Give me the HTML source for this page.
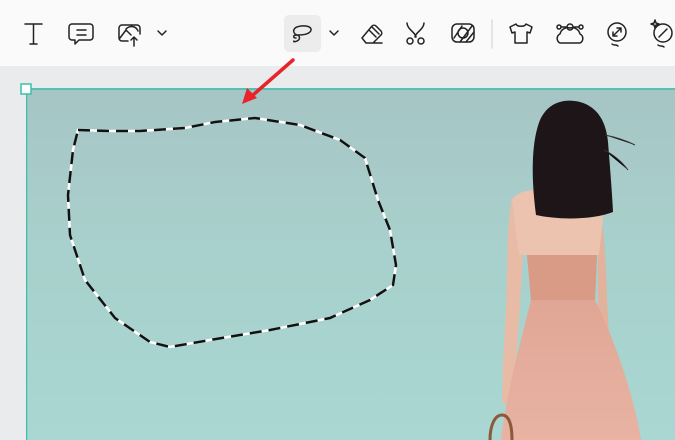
<!DOCTYPE html>
<html><head><style>
body{margin:0;width:675px;height:440px;overflow:hidden;background:#e9ebec;font-family:"Liberation Sans",sans-serif;position:relative}
.tb{position:absolute;left:0;top:0;width:675px;height:66px;background:#fafafa}
svg{position:absolute}
</style></head><body>
<div class="tb"></div>
<svg width="675" height="66" style="left:0;top:0" fill="none" stroke="#222" stroke-width="1.5" stroke-linecap="round" stroke-linejoin="round">
<path d="M25 24h17M33.5 24v20M30 44h7"/>
<path d="M72 24h18a3 3 0 0 1 3 3v10a3 3 0 0 1-3 3h-11l-4 4v-4h-3a3 3 0 0 1-3-3v-10a3 3 0 0 1 3-3zM77 30h9M77 35h9"/>
<path d="M128 41h-6a3 3 0 0 1-3-3v-10a3 3 0 0 1 3-3h15a3 3 0 0 1 3 3v6M120 38l6-8 5 5M134 37v9M131 40l3-3 3 3M126 29c4-4 10-3 12 2"/>
<path d="M158 31l4 4 4-4"/>
<rect x="284" y="15" width="37" height="37" rx="5" fill="#ececec" stroke="none"/>
<path d="M296 38c-3 0-3-3 0-3 5 0 4 5 1 6-2 1-4 1-3 0M297 35c-5-2-5-8 4-9 9-1 12 3 9 6-3 3-9 3-12 3"/>
<path d="M330 31l4 4 4-4"/>
<path d="M362 38l10-12a3 3 0 0 1 4 0l5 5a3 3 0 0 1 0 4l-8 8h-7zM369 30l7 7M372 27l7 7M368 43h14"/>
<path d="M407 23c0 6 9 10 9 14M424 23c0 6-9 10-9 14"/><circle cx="410" cy="41" r="3"/><circle cx="421" cy="41" r="3"/>
<rect x="452" y="24" width="22" height="18" rx="5"/><circle cx="463" cy="33" r="5"/><path d="M454 38l8-12M460 42l12-16M466 42l8-10"/>
<line x1="492" y1="20" x2="492" y2="48" stroke="#ddd"/>
<path d="M516 24l-6 3 2 6 3-1v11h12v-11l3 1 2-6-6-3c-1 3-9 3-10 0z"/>
<path d="M560 34a8 8 0 0 1 10-6a8 8 0 0 1 10 6a5 5 0 0 1 0 9h-20a5 5 0 0 1 0-9zM561 27h5M574 27h5"/><circle cx="570" cy="27" r="3"/><circle cx="559" cy="27" r="2"/><circle cx="581" cy="27" r="2"/>
<circle cx="617" cy="32" r="9"/><path d="M613 36l8-8M613 32v4h4M621 32v-4h-4M612 44c2 2 4 0 6 2"/>
<circle cx="663" cy="33" r="9"/><path d="M659 37l8-8M658 45c2 2 4 0 6 2M655 20l1 3 3 1-3 1-1 3-1-3-3-1 3-1z"/>
</svg>
<svg width="650" height="352" style="left:26px;top:88px" viewBox="26 88 650 352">
<defs>
<linearGradient id="sea" x1="0" y1="0" x2="0" y2="1">
<stop offset="0" stop-color="#a6c5c5"/><stop offset="0.4" stop-color="#a8cfcb"/><stop offset="1" stop-color="#a9d7d2"/></linearGradient>
<linearGradient id="dress" x1="0" y1="0" x2="0" y2="1"><stop offset="0" stop-color="#dea290"/><stop offset="1" stop-color="#e8b3a3"/></linearGradient>
</defs>
<rect x="26" y="88" width="650" height="352" fill="url(#sea)"/>
<line x1="26" y1="89" x2="675" y2="89" stroke="#3bbfad" stroke-width="1.5"/>
<line x1="26.5" y1="89" x2="26.5" y2="440" stroke="#3bbfad" stroke-width="1.5"/>
<path d="M512 198c-6 30-4 70-6 110-2 40-4 70-4 95l10 2c2-30 6-60 8-100 2-35 4-70 4-105z" fill="#e7bba6"/>
<path d="M598 198c6 30 8 65 9 100 2 40 4 70 8 95l-8 2c-4-30-8-60-9-100z" fill="#e2b29c"/>
<path d="M512 200c5-8 15-10 25-10h50c10 0 15 4 18 10l-6 55h-80z" fill="#ecc3ae"/>
<path d="M527 255h70l-2 45c20 40 40 100 46 140h-140c4-40 20-100 30-140z" fill="url(#dress)"/>
<path d="M527 255h70l-2 45h-64z" fill="#d99a86"/>
<path d="M536 215c-4-30-6-70 4-95 8-18 25-22 40-18 18 5 26 20 28 40 2 25 4 50 5 70-20 8-55 8-77 3z" fill="#1d1518"/>
<path d="M605 135c10 2 20 5 30 10M604 150c10 5 18 12 24 20" stroke="#3a3034" stroke-width="1"/>
<path d="M490 440c0-15 5-25 12-25s10 10 10 25" stroke="#8a5a3a" stroke-width="3" fill="none"/>
<path d="M78 130L110 131L140 131L185 128L215 122L255 118L300 125L340 140L365 158L378 200L390 230L396 265L393 285L370 300L330 318L270 330L210 340L170 347L150 342L115 318L85 280L70 235L68 195L73 150Z" fill="none" stroke="#fff" stroke-width="2.5"/>
<path d="M78 130L110 131L140 131L185 128L215 122L255 118L300 125L340 140L365 158L378 200L390 230L396 265L393 285L370 300L330 318L270 330L210 340L170 347L150 342L115 318L85 280L70 235L68 195L73 150Z" fill="none" stroke="#111" stroke-width="2.5" stroke-dasharray="12 7"/>
</svg>
<svg width="675" height="440" style="left:0;top:0">
<rect x="21" y="84" width="10" height="10" fill="#fff" stroke="#3bbfad" stroke-width="1.5"/>
<line x1="293" y1="60" x2="253" y2="95" stroke="#e8242a" stroke-width="3.5" stroke-linecap="round"/>
<path d="M242 104l5-16 10 10z" fill="#e8242a"/>
</svg>
</body></html>
